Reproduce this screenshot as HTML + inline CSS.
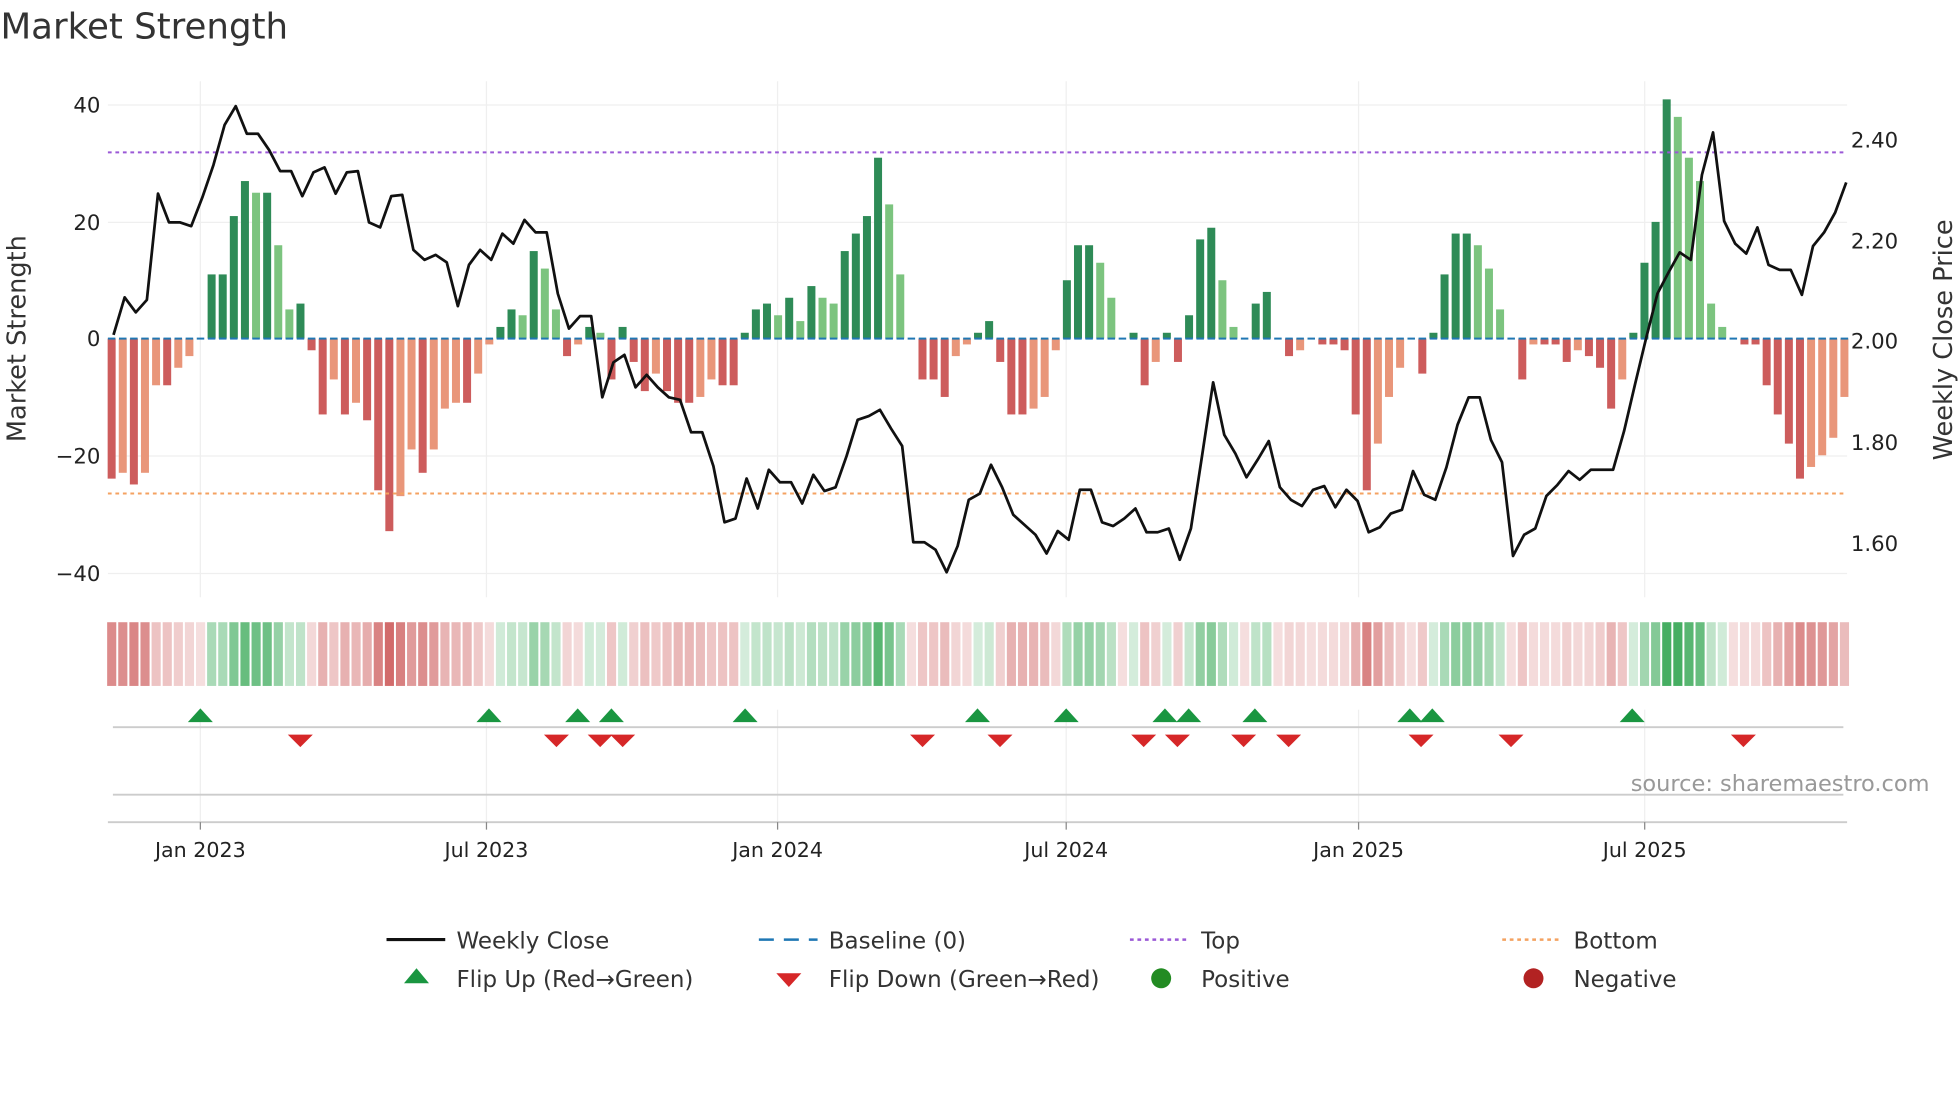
<!DOCTYPE html>
<html><head><meta charset="utf-8"><style>
html,body{margin:0;padding:0;background:#fff;}
svg{display:block;font-family:"DejaVu Sans","Liberation Sans",sans-serif;}
</style></head><body>
<svg id="s" width="1960" height="1102" viewBox="0 0 1568 882" xmlns="http://www.w3.org/2000/svg">
<rect width="1568" height="882" fill="#fff"/>
<text x="0" y="31" font-size="28.5" fill="#333">Market Strength</text>
<g stroke="#efefef" stroke-width="1">
<line x1="86" x2="1478" y1="84" y2="84"/><line x1="86" x2="1478" y1="178" y2="178"/>
<line x1="86" x2="1478" y1="365" y2="365"/><line x1="86" x2="1478" y1="459" y2="459"/>
<line x1="160" x2="160" y1="65" y2="478"/><line x1="389" x2="389" y1="65" y2="478"/>
<line x1="622" x2="622" y1="65" y2="478"/><line x1="853" x2="853" y1="65" y2="478"/>
<line x1="1087" x2="1087" y1="65" y2="478"/><line x1="1316" x2="1316" y1="65" y2="478"/>
<line x1="160" x2="160" y1="568" y2="658"/><line x1="389" x2="389" y1="568" y2="658"/>
<line x1="622" x2="622" y1="568" y2="658"/><line x1="853" x2="853" y1="568" y2="658"/>
<line x1="1087" x2="1087" y1="568" y2="658"/><line x1="1316" x2="1316" y1="568" y2="658"/>
</g>
<g id="bars"></g>
<line x1="86" x2="1478" y1="122" y2="122" stroke="#9b59d6" stroke-width="1.6" stroke-dasharray="3,3"/>
<line x1="86" x2="1478" y1="395" y2="395" stroke="#f4a261" stroke-width="1.6" stroke-dasharray="3,3"/>
<polyline id="price" fill="none" stroke="#111" stroke-width="2.2" stroke-linejoin="round"/>
<g id="heat"></g>
<line x1="90" x2="1475" y1="582" y2="582" stroke="#ccc" stroke-width="1.5"/>
<line x1="90" x2="1475" y1="636" y2="636" stroke="#ccc" stroke-width="1.5"/>
<line x1="86" x2="1478" y1="658" y2="658" stroke="#ccc" stroke-width="1.5"/>
<g id="flips"></g>
<g font-size="17" fill="#222" text-anchor="end">
<text x="80" y="90">40</text><text x="80" y="184">20</text><text x="80" y="277">0</text>
<text x="80" y="371">−20</text><text x="80" y="465">−40</text>
</g>
<g font-size="17" fill="#222">
<text x="1481" y="118">2.40</text><text x="1481" y="199">2.20</text><text x="1481" y="279">2.00</text>
<text x="1481" y="360">1.80</text><text x="1481" y="441">1.60</text>
</g>
<text transform="translate(20,271) rotate(-90)" font-size="20.5" fill="#333" text-anchor="middle">Market Strength</text>
<text transform="translate(1562,272) rotate(-90)" font-size="20.5" fill="#333" text-anchor="middle">Weekly Close Price</text>
<g stroke="#888" stroke-width="1"><line x1="160" x2="160" y1="658" y2="664"/><line x1="389" x2="389" y1="658" y2="664"/><line x1="622" x2="622" y1="658" y2="664"/><line x1="853" x2="853" y1="658" y2="664"/><line x1="1087" x2="1087" y1="658" y2="664"/><line x1="1316" x2="1316" y1="658" y2="664"/></g>
<g font-size="16.5" fill="#222" text-anchor="middle">
<text x="160" y="686">Jan 2023</text><text x="389" y="686">Jul 2023</text><text x="622" y="686">Jan 2024</text>
<text x="853" y="686">Jul 2024</text><text x="1087" y="686">Jan 2025</text><text x="1316" y="686">Jul 2025</text>
</g>
<text x="1544" y="633" font-size="18" fill="#999" text-anchor="end">source: sharemaestro.com</text>
<g font-size="18.4" fill="#333">
<line x1="309" x2="356" y1="752" y2="752" stroke="#111" stroke-width="2.5"/><text x="365" y="759">Weekly Close</text>
<line x1="607" x2="654" y1="752" y2="752" stroke="#1f77b4" stroke-width="2" stroke-dasharray="12,8"/><text x="663" y="759">Baseline (0)</text>
<line x1="904" x2="951" y1="752" y2="752" stroke="#9b59d6" stroke-width="2" stroke-dasharray="3,3"/><text x="961" y="759">Top</text>
<line x1="1202" x2="1249" y1="752" y2="752" stroke="#f4a261" stroke-width="2" stroke-dasharray="3,3"/><text x="1259" y="759">Bottom</text>
<polygon points="323,787 333,775 343,787" fill="#1a9641"/><text x="365" y="790">Flip Up (Red→Green)</text>
<polygon points="621,779 641,779 631,790" fill="#d62728"/><text x="663" y="790">Flip Down (Green→Red)</text>
<circle cx="929" cy="783" r="8" fill="#228b22"/><text x="961" y="790">Positive</text>
<circle cx="1227" cy="783" r="8" fill="#b22222"/><text x="1259" y="790">Negative</text>
</g>
</svg>
<script>
var v=[-24,-23,-25,-23,-8,-8,-5,-3,0,11,11,21,27,25,25,16,5,6,-2,-13,-7,-13,-11,-14,-26,-33,-27,-19,-23,-19,-12,-11,-11,-6,-1,2,5,4,15,12,5,-3,-1,2,1,-7,2,-4,-9,-6,-9,-11,-11,-10,-7,-8,-8,1,5,6,4,7,3,9,7,6,15,18,21,31,23,11,0,-7,-7,-10,-3,-1,1,3,-4,-13,-13,-12,-10,-2,10,16,16,13,7,0,1,-8,-4,1,-4,4,17,19,10,2,0,6,8,0,-3,-2,0,-1,-1,-2,-13,-26,-18,-10,-5,0,-6,1,11,18,18,16,12,5,0,-7,-1,-1,-1,-4,-2,-3,-5,-12,-7,1,13,20,41,38,31,27,6,2,0,-1,-1,-8,-13,-18,-24,-22,-20,-17,-10];
var p=[268,238,250,240,155,178,178,181,158,132,100,85,107,107,120,137,137,157,138,134,155,138,137,178,182,157,156,200,208,204,210,245,212,200,208,187,195,176,186,186,235,263,253,253,318,290,284,310,300,310,318,320,346,346,373,418,415,383,407,376,386,386,403,380,393,390,365,336,333,328,343,357,434,434,440,458,437,400,395,372,390,412,420,428,443,425,432,392,392,418,421,415,407,426,426,423,448,423,365,306,348,363,382,368,353,390,400,405,392,389,406,392,401,426,422,411,408,377,396,400,374,340,318,318,352,370,445,428,423,397,388,377,384,376,376,376,345,307,270,235,218,202,208,140,106,177,195,203,182,212,216,216,236,197,186,170,146];
var b="",h="",pts=[],step=8.89;
for(var i=0;i<v.length;i++){var x=89+i*step,val=v[i],pr=i?v[i-1]:0,y0=271,hh=val*4.67,c;
if(val>0)c=val>=pr?"#2e8b57":"#7cc47f";else c=val<=pr?"#cd5c5c":"#e9967a";
if(val!=0)b+='<rect x="'+(x-3.2)+'" y="'+(val>0?y0-hh:y0)+'" width="6.4" height="'+Math.abs(hh)+'" fill="'+c+'"/>';
b+='<line x1="'+(x-3)+'" x2="'+(x+3)+'" y1="271" y2="271" stroke="#1f77b4" stroke-width="1.6"/>';
var a=0.2+0.75*Math.min(1,Math.abs(val)/35);
h+='<rect x="'+(x-3.6)+'" y="498" width="7.3" height="51" fill="'+(val>0?"rgb(60,170,90)":"rgb(205,92,92)")+'" fill-opacity="'+a.toFixed(2)+'"/>';
pts.push((x+1.5).toFixed(1)+","+p[i]);}
document.getElementById("bars").innerHTML=b;
document.getElementById("heat").innerHTML=h;
document.getElementById("price").setAttribute("points",pts.join(" "));
var up=[160,391,462,489,596,782,853,932,951,1004,1128,1146,1306],dn=[240,445,480,498,738,800,915,942,995,1031,1137,1209,1395],f="";
up.forEach(function(x){f+='<polygon points="'+(x-10)+',578 '+x+',567 '+(x+10)+',578" fill="#1a9641"/>';});
dn.forEach(function(x){f+='<polygon points="'+(x-10)+',588 '+(x+10)+',588 '+x+',598" fill="#d62728"/>';});
document.getElementById("flips").innerHTML=f;
</script>
</body></html>
